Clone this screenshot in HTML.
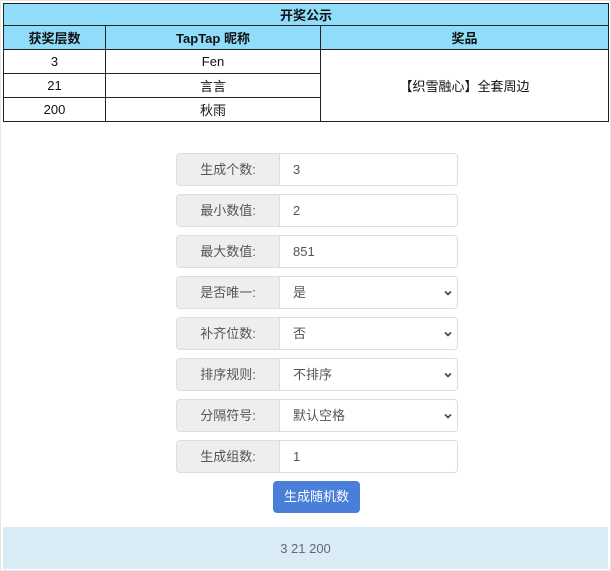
<!DOCTYPE html><html><head><meta charset="utf-8"><style>
body{margin:0;width:611px;height:571px;background:#fff;font-family:"Liberation Sans","Noto Sans CJK SC",sans-serif;position:relative;overflow:hidden}
.frame{position:absolute;left:0;top:0;width:609px;height:569px;border:1px solid #e6e6e6}
table{position:absolute;left:3px;top:3px;width:606px;border-collapse:collapse;font-size:13px;color:#111}
td{border:1px solid #222;text-align:center;height:23px;padding:0}
.h td{background:#8fdcfb;font-weight:bold}
.g{position:absolute;left:176px;width:280px;height:31px;border:1px solid #ddd;border-radius:4px;overflow:hidden;font-size:13px;color:#555}
.g .l{position:absolute;left:0;top:0;width:102px;height:31px;background:#eee;border-right:1px solid #ddd;text-align:center;line-height:31px}
.g .v{position:absolute;left:116px;top:0;line-height:31px;color:#555}
.g svg{position:absolute;right:5px;top:13px}
.btn{position:absolute;left:273px;top:481px;width:87px;height:32px;background:#4a7fd9;border-radius:4px;color:#fff;font-size:13px;text-align:center;line-height:32px}
.res{position:absolute;left:3px;top:527px;width:605px;height:42px;background:#d9ecf6;color:#667;font-size:13px;text-align:center;line-height:44px}
</style></head><body>
<div class="frame"></div>
<table>
<tr class="h"><td colspan="3" style="height:21px">开奖公示</td></tr>
<tr class="h"><td style="width:101px">获奖层数</td><td style="width:214px">TapTap 昵称</td><td>奖品</td></tr>
<tr><td>3</td><td>Fen</td><td rowspan="3">【织雪融心】全套周边</td></tr>
<tr><td>21</td><td>言言</td></tr>
<tr><td>200</td><td>秋雨</td></tr>
</table>
<div class="g" style="top:153px"><div class="l">生成个数:</div><div class="v">3</div></div>
<div class="g" style="top:194px"><div class="l">最小数值:</div><div class="v">2</div></div>
<div class="g" style="top:235px"><div class="l">最大数值:</div><div class="v">851</div></div>
<div class="g" style="top:276px"><div class="l">是否唯一:</div><div class="v">是</div><svg width="8" height="6"><path d="M1 1.5L4 4.5L7 1.5" stroke="#444" stroke-width="1.6" fill="none"/></svg></div>
<div class="g" style="top:317px"><div class="l">补齐位数:</div><div class="v">否</div><svg width="8" height="6"><path d="M1 1.5L4 4.5L7 1.5" stroke="#444" stroke-width="1.6" fill="none"/></svg></div>
<div class="g" style="top:358px"><div class="l">排序规则:</div><div class="v">不排序</div><svg width="8" height="6"><path d="M1 1.5L4 4.5L7 1.5" stroke="#444" stroke-width="1.6" fill="none"/></svg></div>
<div class="g" style="top:399px"><div class="l">分隔符号:</div><div class="v">默认空格</div><svg width="8" height="6"><path d="M1 1.5L4 4.5L7 1.5" stroke="#444" stroke-width="1.6" fill="none"/></svg></div>
<div class="g" style="top:440px"><div class="l">生成组数:</div><div class="v">1</div></div>
<div class="btn">生成随机数</div>
<div class="res">3 21 200</div>
</body></html>
